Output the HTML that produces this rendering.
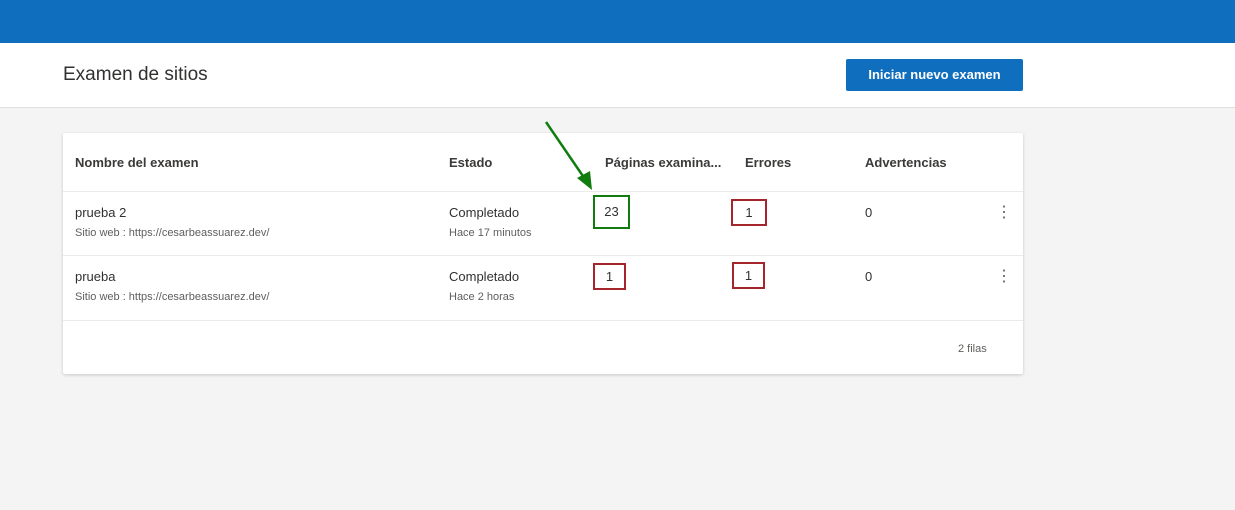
<!DOCTYPE html>
<html><head><meta charset="utf-8"><style>
*{margin:0;padding:0;box-sizing:border-box}
body{width:1235px;height:510px;background:#f4f4f4;font-family:"Liberation Sans",sans-serif;color:#323130;position:relative;overflow:hidden}
.a{position:absolute;white-space:nowrap}
.top{left:0;top:0;width:1235px;height:43px;background:#106ebe}
.hdr{left:0;top:43px;width:1235px;height:65px;background:#fff;border-bottom:1px solid #e1dfdd}
.card{left:63px;top:133px;width:960px;height:241px;background:#fff;box-shadow:0 1px 3px rgba(0,0,0,.18);border-radius:2px}
.line{height:1px;background:#edebe9;left:63px;width:960px}
.th{font-size:13px;font-weight:bold;color:#3b3a39;top:155px}
.t{font-size:13px}
.s{font-size:11px;color:#605e5c}
.box{border:2px solid #a4262c;font-size:13px;text-align:center;line-height:23px;height:27px}
.dots{font-size:16px;color:#605e5c;line-height:16px}
</style></head><body>
<div class="a top"></div>
<div class="a hdr"></div>
<div class="a" style="left:63px;top:64px;font-size:19px;color:#323130">Examen de sitios</div>
<div class="a" style="left:846px;top:59px;width:177px;height:32px;background:#106ebe;color:#fff;font-size:13px;font-weight:bold;text-align:center;line-height:32px;border-radius:2px">Iniciar nuevo examen</div>
<div class="a card"></div>
<div class="a line" style="top:191px"></div>
<div class="a line" style="top:255px"></div>
<div class="a line" style="top:320px"></div>
<div class="a th" style="left:75px">Nombre del examen</div>
<div class="a th" style="left:449px">Estado</div>
<div class="a th" style="left:605px">Páginas examina...</div>
<div class="a th" style="left:745px">Errores</div>
<div class="a th" style="left:865px">Advertencias</div>

<div class="a t" style="left:75px;top:205px">prueba 2</div>
<div class="a s" style="left:75px;top:227px">Sitio web : https://cesarbeassuarez.dev/</div>
<div class="a t" style="left:449px;top:205px">Completado</div>
<div class="a s" style="left:449px;top:227px">Hace 17 minutos</div>
<div class="a box" style="left:593px;top:195px;width:37px;height:34px;line-height:30px;border-color:#107c10">23</div>
<div class="a box" style="left:731px;top:199px;width:36px">1</div>
<div class="a t" style="left:865px;top:205px">0</div>
<div class="a dots" style="left:996px;top:205px">⋮</div>

<div class="a t" style="left:75px;top:269px">prueba</div>
<div class="a s" style="left:75px;top:291px">Sitio web : https://cesarbeassuarez.dev/</div>
<div class="a t" style="left:449px;top:269px">Completado</div>
<div class="a s" style="left:449px;top:291px">Hace 2 horas</div>
<div class="a box" style="left:593px;top:263px;width:33px">1</div>
<div class="a box" style="left:732px;top:262px;width:33px">1</div>
<div class="a t" style="left:865px;top:269px">0</div>
<div class="a dots" style="left:996px;top:269px">⋮</div>

<div class="a s" style="left:958px;top:343px">2 filas</div>

<svg class="a" style="left:540px;top:118px" width="60" height="75"><line x1="6" y1="4" x2="47" y2="64" stroke="#107c10" stroke-width="2.5"/><polygon points="52,72 37,60 50,53" fill="#107c10"/></svg>
</body></html>
